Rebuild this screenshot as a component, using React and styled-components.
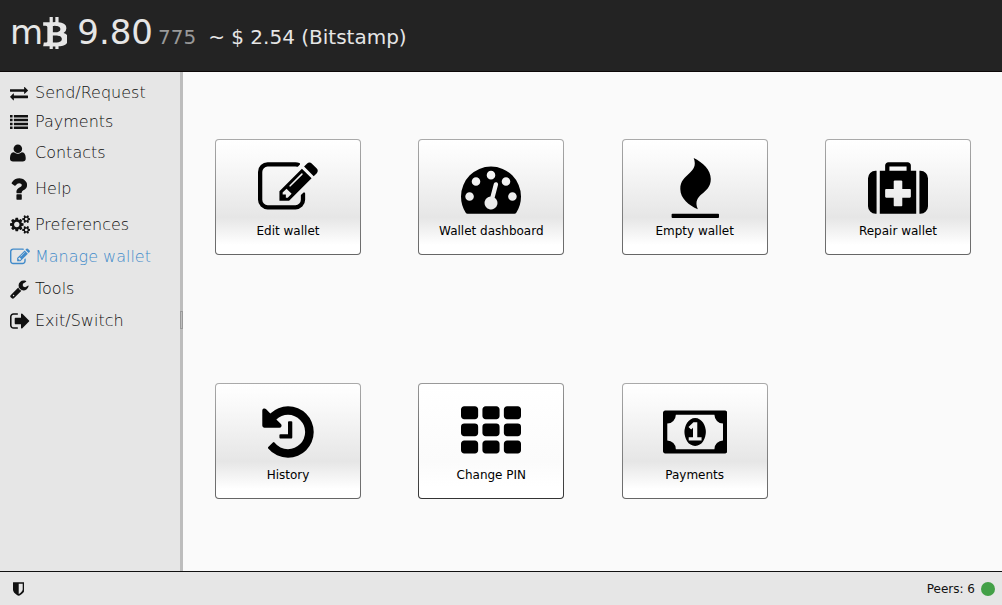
import React, {useState} from 'react'
import styled, {createGlobalStyle} from 'styled-components'

const GlobalStyle = createGlobalStyle`
    * {
        box-sizing: border-box;
    }

    body {
        margin: 0;
        font-family: "DejaVu Sans", sans-serif;
    }
`

const icons = {
    btc: {
        box: '0 128 1216 1536',
        path: 'M1167 640q18 182-131 258 117 28 175 103t45 214q-7 71-32.5 125t-64.5 89-97 58.5-121.5 34.5-145.5 15v255h-154v-251q-80 0-122-1v252h-154v-255q-18 0-54-.5t-55-.5h-200l31-183h111q50 0 58-51v-402h16q-6-1-16-1v-287q-13-68-89-68h-111v-164l212 1q64 0 97-1v-252h154v247q82-2 122-2v-245h154v252q79 7 140 22.5t113 45 82.5 78 36.5 114.5zm-215 545q0-36-15-64t-37-46-57.5-30.5-65.5-18.5-74-9-69-3-64.5 1-47.5 1v338q8 0 37 .5t48 .5 53-1.5 58.5-4 57-8.5 55.5-14 47.5-21 39.5-30 24.5-40 9.5-51zm-71-476q0-33-12.5-58.5t-30.5-42-48-28-55-16.5-61.5-8-58-2.5-54 1-39.5.5v307q5 0 34.5.5t46.5 0 50-2 55-5.5 51.5-11 48.5-18.5 37-27 27-38.5 9-51z'
    },
    exchange: {
        box: '0 0 1792 1792',
        path: 'M1792 1184v192q0 13-9.5 22.5t-22.5 9.5h-1376v192q0 13-9.5 22.5t-22.5 9.5q-12 0-24-10l-319-320q-9-9-9-22 0-14 9-23l320-320q9-9 23-9 13 0 22.5 9.5t9.5 22.5v192h1376q13 0 22.5 9.5t9.5 22.5zm0-544q0 14-9 23l-320 320q-9 9-23 9-13 0-22.5-9.5t-9.5-22.5v-192h-1376q-13 0-22.5-9.5t-9.5-22.5v-192q0-13 9.5-22.5t22.5-9.5h1376v-192q0-14 9-23t23-9q12 0 24 10l319 319q9 9 9 23z'
    },
    list: {
        box: '0 0 1792 1792',
        path: [192, 576, 960, 1344].map(y => `M0 ${y}h256v256h-256zM384 ${y}h1408v256h-1408z`).join('')
    },
    user: {
        box: '192 0 1408 1792',
        path: 'M1600 1405q0 120-73 189.5t-194 69.5h-874q-121 0-194-69.5t-73-189.5q0-53 3.5-103.5t14-109 26.5-108.5 43-97.5 62-81 85.5-53.5 111.5-20q9 0 42 21.5t74.5 48 108 48 133.5 21.5 133.5-21.5 108-48 74.5-48 42-21.5q61 0 111.5 20t85.5 53.5 62 81 43 97.5 26.5 108.5 14 109 3.5 103.5zm-320-893q0 159-112.5 271.5t-271.5 112.5-271.5-112.5-112.5-271.5 112.5-271.5 271.5-112.5 271.5 112.5 112.5 271.5z'
    },
    question: {
        box: '384 0 1024 1792',
        path: 'M1088 1256v240q0 16-12 28t-28 12h-240q-16 0-28-12t-12-28v-240q0-16 12-28t28-12h240q16 0 28 12t12 28zm316-600q0 54-15.5 101t-35 76.5-55 59.5-57.5 43.5-61 35.5q-41 23-68.5 65t-27.5 67q0 17-12 32.5t-28 15.5h-240q-15 0-25.5-18.5t-10.5-37.5v-45q0-83 65-156.5t143-108.5q59-27 84-56t25-76q0-42-46.5-74t-107.5-32q-65 0-108 29-35 25-107 115-13 16-31 16-12 0-25-8l-164-125q-13-10-15.5-25t5.5-28q160-266 464-266 80 0 161 31t146 83 106 127.5 41 158.5z'
    },
    cogs: {
        box: '0 0 1920 1792',
        path: 'M896 896q0-106-75-181t-181-75-181 75-75 181 75 181 181 75 181-75 75-181zm768 512q0-52-38-90t-90-38-90 38-38 90q0 53 37.5 90.5t90.5 37.5 90.5-37.5 37.5-90.5zm0-1024q0-52-38-90t-90-38-90 38-38 90q0 53 37.5 90.5t90.5 37.5 90.5-37.5 37.5-90.5zm-384 421v185q0 10-7 19.5t-16 10.5l-155 24q-11 35-32 76 34 48 90 115 7 11 7 20 0 12-7 19-23 30-82.5 89.5t-78.5 59.5q-11 0-21-7l-115-90q-37 19-77 31-11 108-23 155-7 24-30 24h-186q-11 0-20-7.5t-10-17.5l-23-153q-34-10-75-31l-118 89q-7 7-20 7-11 0-21-8-144-133-144-160 0-9 7-19 10-14 41-53t47-61q-23-44-35-82l-152-24q-10-1-17-9.5t-7-19.5v-185q0-10 7-19.5t16-10.5l155-24q11-35 32-76-34-48-90-115-7-11-7-20 0-12 7-20 22-30 82-89t79-59q11 0 21 7l115 90q34-18 77-32 11-108 23-154 7-24 30-24h186q11 0 20 7.5t10 17.5l23 153q34 10 75 31l118-89q8-7 20-7 11 0 21 8 144 133 144 160 0 8-7 19-12 16-42 54t-45 60q23 48 34 82l152 23q10 2 17 10.5t7 19.5zm640 533v140q0 16-149 31-12 27-30 52 51 113 51 138 0 4-4 7-122 71-124 71-8 0-46-47t-52-68q-20 2-30 2t-30-2q-14 21-52 68t-46 47q-2 0-124-71-4-3-4-7 0-25 51-138-18-25-30-52-149-15-149-31v-140q0-16 149-31 13-29 30-52-51-113-51-138 0-4 4-7 4-2 35-20t59-34 30-16q8 0 46 46.5t52 67.5q20-2 30-2t30 2q51-71 92-112l6-2q4 0 124 70 4 3 4 7 0 25-51 138 17 23 30 52 149 15 149 31zm0-1024v140q0 16-149 31-12 27-30 52 51 113 51 138 0 4-4 7-122 71-124 71-8 0-46-47t-52-68q-20 2-30 2t-30-2q-14 21-52 68t-46 47q-2 0-124-71-4-3-4-7 0-25 51-138-18-25-30-52-149-15-149-31v-140q0-16 149-31 13-29 30-52-51-113-51-138 0-4 4-7 4-2 35-20t59-34 30-16q8 0 46 46.5t52 67.5q20-2 30-2t30 2q51-71 92-112l6-2q4 0 124 70 4 3 4 7 0 25-51 138 17 23 30 52 149 15 149 31z'
    },
    edit: {
        box: '0 0 1792 1792',
        path: 'M888 1184l116-116-152-152-116 116v56h96v96h56zm440-720q-16-16-33 1l-350 350q-17 17-1 33t33-1l350-350q17-17 1-33zm80 594v190q0 119-84.5 203.5t-203.5 84.5h-832q-119 0-203.5-84.5t-84.5-203.5v-832q0-119 84.5-203.5t203.5-84.5h832q63 0 117 25 15 7 18 23 3 17-9 29l-49 49q-14 14-32 8-23-6-45-6h-832q-66 0-113 47t-47 113v832q0 66 47 113t113 47h832q66 0 113-47t47-113v-126q0-13 9-22l64-64q15-15 35-7t20 29zm-96-738l288 288-672 672h-288v-288zm444 132l-92 92-288-288 92-92q28-28 68-28t68 28l152 152q28 28 28 68t-28 68z'
    },
    wrench: {
        box: '64 0 1728 1792',
        path: 'M448 1472q0-26-19-45t-45-19-45 19-19 45 19 45 45 19 45-19 19-45zm644-420l-682 682q-37 37-90 37-52 0-91-37l-106-108q-38-36-38-90 0-53 38-91l681-681q39 98 114.5 173.5t173.5 114.5zm634-435q0 39-23 106-47 134-164.5 217.5t-258.5 83.5q-185 0-316.5-131.5t-131.5-316.5 131.5-316.5 316.5-131.5q58 0 121.5 16.5t107.5 46.5q16 11 16 28t-16 28l-293 169v224l193 107q5-3 79-48.5t135.5-81 70.5-35.5q15 0 23.5 10t8.5 25z'
    },
    signOut: {
        box: '64 0 1600 1792',
        path: 'M704 1440q0 4 1 20t.5 26.5-3 23.5-10 19.5-20.5 6.5h-320q-119 0-203.5-84.5t-84.5-203.5v-704q0-119 84.5-203.5t203.5-84.5h320q13 0 22.5 9.5t9.5 22.5q0 4 1 20t.5 26.5-3 23.5-10 19.5-20.5 6.5h-320q-66 0-113 47t-47 113v704q0 66 47 113t113 47h312l11.5 1 11.5 3 8 5.5 7 9 2 13.5zm928-544q0 26-19 45l-544 544q-19 19-45 19t-45-19-19-45v-288h-448q-26 0-45-19t-19-45v-384q0-26 19-45t45-19h448v-288q0-26 19-45t45-19 45 19l544 544q19 19 19 45z'
    },
    dashboard: {
        box: '0 0 1792 1792',
        path: 'M384 1152q0-53-37.5-90.5t-90.5-37.5-90.5 37.5-37.5 90.5 37.5 90.5 90.5 37.5 90.5-37.5 37.5-90.5zm192-448q0-53-37.5-90.5t-90.5-37.5-90.5 37.5-37.5 90.5 37.5 90.5 90.5 37.5 90.5-37.5 37.5-90.5zm428 481l101-382q6-26-7.5-48.5t-38.5-29.5-48 6.5-30 39.5l-101 382q-60 5-107 43.5t-63 98.5q-20 77 20 146t117 89 146-20 89-117q16-60-6-117t-72-91zm660-33q0-53-37.5-90.5t-90.5-37.5-90.5 37.5-37.5 90.5 37.5 90.5 90.5 37.5 90.5-37.5 37.5-90.5zm-640-640q0-53-37.5-90.5t-90.5-37.5-90.5 37.5-37.5 90.5 37.5 90.5 90.5 37.5 90.5-37.5 37.5-90.5zm448 192q0-53-37.5-90.5t-90.5-37.5-90.5 37.5-37.5 90.5 37.5 90.5 90.5 37.5 90.5-37.5 37.5-90.5zm320 448q0 261-141 483-19 29-54 29h-1402q-35 0-54-29-141-221-141-483 0-182 71-348t191-286 286-191 348-71 348 71 286 191 191 286 71 348z'
    },
    fire: {
        box: '0 0 60 60',
        path: 'M28.7 0C38 4.5 45.8 12 45.8 21C45.8 37 26.5 35 32.8 51.2C24 47.5 15.3 40.5 15.3 31C15.3 15 34.5 16 28.7 0zM7.5 55.7h45.6q.9 0 .9.9v2.5q0 .9-.9.9h-45.6q-.9 0-.9-.9v-2.5q0-.9.9-.9z'
    },
    medkit: {
        box: '0 0 1792 1792',
        path: 'M1280 1152v-192q0-14-9-23t-23-9h-224v-224q0-14-9-23t-23-9h-192q-14 0-23 9t-9 23v224h-224q-14 0-23 9t-9 23v192q0 14 9 23t23 9h224v224q0 14 9 23t23 9h192q14 0 23-9t9-23v-224h224q14 0 23-9t9-23zm-640-768h512v-128h-512v128zm-384 0v1280h-32q-92 0-158-66t-66-158v-832q0-92 66-158t158-66h32zm1184 0v1280h-1088v-1280h160v-160q0-40 28-68t68-28h576q40 0 68 28t28 68v160h160zm352 224v832q0 92-66 158t-158 66h-32v-1280h32q92 0 158 66t66 158z'
    },
    history: {
        box: '0 0 1792 1792',
        path: 'M1664 896q0 156-61 298t-164 245-245 164-298 61q-172 0-327-72.5t-264-204.5q-7-10-6.5-22.5t8.5-20.5l137-138q10-9 25-9 16 2 23 12 73 95 179 147t225 52q104 0 198.5-40.5t163.5-109.5 109.5-163.5 40.5-198.5-40.5-198.5-109.5-163.5-163.5-109.5-198.5-40.5q-98 0-188 35.5t-160 101.5l137 138q31 30 14 69-17 40-59 40h-448q-26 0-45-19t-19-45v-448q0-42 40-59 39-17 69 14l130 129q107-101 244.5-156.5t284.5-55.5q156 0 298 61t245 164 164 245 61 298zm-640-288v448q0 14-9 23t-23 9h-320q-14 0-23-9t-9-23v-64q0-14 9-23t23-9h224v-352q0-14 9-23t23-9h64q14 0 23 9t9 23z'
    },
    th: {
        box: '0 0 1792 1792',
        path: [0, 640, 1280].map(x => [128, 640, 1152].map(y =>
            `M${x + 96} ${y}h320q40 0 68 28t28 68v192q0 40-28 68t-68 28h-320q-40 0-68-28t-28-68v-192q0-40 28-68t68-28z`
        ).join('')).join('')
    },
    money: {
        box: '0 0 1920 1792',
        path: 'M768 1152h384v-96h-128v-448h-114l-148 137 77 80q42-37 55-57h2v288h-128v96zm512-256q0 70-21 142t-59.5 134-101.5 101-138 39-138-39-101.5-101-59.5-134-21-142 21-142 59.5-134 101.5-101 138-39 138 39 101.5 101 59.5 134 21 142zm512 256v-512q-106 0-181-75t-75-181h-1152q0 106-75 181t-181 75v512q106 0 181 75t75 181h1152q0-106 75-181t181-75zm128-832v1152q0 26-19 45t-45 19h-1792q-26 0-45-19t-19-45v-1152q0-26 19-45t45-19h1792q26 0 45 19t19 45z'
    },
    shield: {
        box: '256 0 1280 1792',
        path: 'M1344 960v-640h-448v1137q119-63 213-137 235-184 235-360zm192-768v768q0 86-33.5 170.5t-83 150-118 127.5-126.5 103-121 77.5-89.5 49.5-42.5 20q-12 6-26 6t-26-6q-16-7-42.5-20t-89.5-49.5-121-77.5-126.5-103-118-127.5-83-150-33.5-170.5v-768q0-26 19-45t45-19h1152q26 0 45 19t19 45z'
    }
}

const menuItems = [
    {name: 'Send/Request', icon: 'exchange', size: 18, height: 19},
    {name: 'Payments', icon: 'list', size: 18, height: 19},
    {name: 'Contacts', icon: 'user', size: 20, height: 23},
    {name: 'Help', icon: 'question', size: 30, height: 29},
    {name: 'Preferences', icon: 'cogs', size: 19, height: 23},
    {name: 'Manage wallet', icon: 'edit', size: 20, height: 21},
    {name: 'Tools', icon: 'wrench', size: 20, height: 23},
    {name: 'Exit/Switch', icon: 'signOut', size: 22, height: 21}
]

const tiles = [
    {name: 'Edit wallet', icon: 'edit'},
    {name: 'Wallet dashboard', icon: 'dashboard'},
    {name: 'Empty wallet', icon: 'fire'},
    {name: 'Repair wallet', icon: 'medkit'},
    {name: 'History', icon: 'history'},
    {name: 'Change PIN', icon: 'th', focused: true},
    {name: 'Payments', icon: 'money'}
]

const Page = styled.div`
    background: #fafafa;
    color: #111;
    display: flex;
    flex-direction: column;
    min-height: 100vh;
`

const Header = styled.header`
    align-items: baseline;
    background: #232323;
    border-bottom: 1px solid #0c0808;
    color: #e6e6e6;
    display: flex;
    height: 72px;
    padding: 12px 10px 0;
    white-space: pre;
`

const Balance = styled.span`
    font-size: 34px;
    line-height: 40px;
`

const BalanceSmall = styled.span`
    color: #999;
    font-size: 20px;
    margin-left: 5px;
`

const Fiat = styled.span`
    font-size: 20px;
    margin-left: 12px;
`

const Glyph = styled.svg`
    display: block;
    fill: currentColor;
    flex: none;
    height: ${props => props.$size}px;
`

const InlineGlyph = styled(Glyph)`
    display: inline-block;
    margin: 0 -1px;
    vertical-align: -5px;
`

const Body = styled.div`
    display: flex;
    flex: 1;
`

const Sidebar = styled.nav`
    background: #e6e6e6;
    display: flex;
    flex-direction: column;
    gap: 10px;
    padding: 11px 0 10px 10px;
    width: 180px;
`

const MenuItem = styled.button`
    align-items: center;
    background: none;
    border: 0;
    color: ${props => props.$active ? '#428bca' : '#111'};
    cursor: pointer;
    display: flex;
    font-family: "DejaVu Sans Light", "DejaVu Sans", sans-serif;
    font-size: 16px;
    font-weight: 200;
    gap: 5px;
    height: ${props => props.$height}px;
    line-height: 19px;
    padding: 0;
    text-align: left;
`

const IconSlot = styled.span`
    display: flex;
    width: 20px;
`

const Divider = styled.div`
    align-items: center;
    background: #bdbdbd;
    display: flex;
    padding-bottom: 4px;
    width: 3px;
`

const Grip = styled.div`
    border: 1px solid #999;
    height: 18px;
    width: 3px;
`

const Tiles = styled.main`
    align-items: center;
    display: grid;
    flex: 1;
    grid-auto-rows: 1fr;
    grid-template-columns: repeat(4, 146px);
    justify-content: space-between;
    padding: 3px 31px 8px 32px;
`

const Tile = styled.button`
    align-items: center;
    background:
        ${props => props.$focused
            ? 'linear-gradient(#fff, #fbfbfb 68%, #fff 90%)'
            : 'linear-gradient(#fff, #f9f9f9 20%, #e6e6e6 68%, #fff 92%)'} padding-box,
        ${props => props.$focused
            ? 'linear-gradient(#999, #333)'
            : 'linear-gradient(#aaa, #666)'} border-box;
    border: 1px solid transparent;
    border-radius: 4px;
    color: #000;
    cursor: pointer;
    display: flex;
    flex-direction: column;
    font-family: "DejaVu Sans", sans-serif;
    font-size: 12px;
    gap: 6px;
    height: 116px;
    line-height: 14px;
    padding: 18px 0 0;
`

const Footer = styled.footer`
    align-items: center;
    background: #e6e6e6;
    border-top: 1px solid #111;
    display: flex;
    font-size: 12px;
    height: 34px;
    justify-content: space-between;
    padding: 0 7px 0 13px;
`

const Peers = styled.div`
    align-items: center;
    display: flex;
    gap: 6px;
`

const StatusDot = styled.span`
    background: #43a047;
    border-radius: 50%;
    height: 14px;
    width: 14px;
`

const Icon = ({as: Component = Glyph, name, size}) => (
    <Component $size={size} aria-hidden='true' viewBox={icons[name].box}>
        <path d={icons[name].path} fillRule='evenodd' />
    </Component>
)

const App = () => {
    const [active, setActive] = useState('Manage wallet')

    return (
        <Page>
            <GlobalStyle />
            <Header>
                <Balance>m<Icon as={InlineGlyph} name='btc' size={32} /> 9.80</Balance>
                <BalanceSmall>775</BalanceSmall>
                <Fiat>~ $ 2.54 (Bitstamp)</Fiat>
            </Header>
            <Body>
                <Sidebar>
                    {menuItems.map(item => (
                        <MenuItem
                            $active={item.name === active}
                            $height={item.height}
                            key={item.name}
                            onClick={() => setActive(item.name)}
                        >
                            <IconSlot>
                                <Icon name={item.icon} size={item.size} />
                            </IconSlot>
                            {item.name}
                        </MenuItem>
                    ))}
                </Sidebar>
                <Divider>
                    <Grip />
                </Divider>
                <Tiles>
                    {tiles.map(tile => (
                        <Tile $focused={tile.focused} key={tile.name}>
                            <Icon name={tile.icon} size={60} />
                            {tile.name}
                        </Tile>
                    ))}
                </Tiles>
            </Body>
            <Footer>
                <Icon name='shield' size={16} />
                <Peers>
                    Peers: 6
                    <StatusDot />
                </Peers>
            </Footer>
        </Page>
    )
}

export default App
